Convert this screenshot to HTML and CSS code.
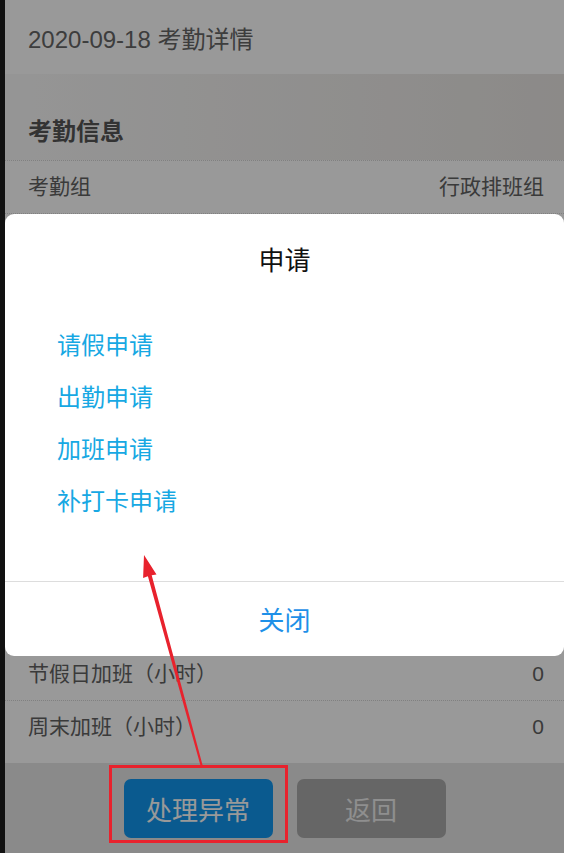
FILE: index.html
```html
<!DOCTYPE html>
<html lang="zh-CN">
<head>
    <meta charset="UTF-8">
    <meta name="viewport" content="width=device-width, initial-scale=1.0">
    <title>考勤详情</title>
    <link rel="stylesheet" href="styles.css">
</head>
<body>
    <div class="app">
        <div class="page">
            <div class="page-header">2020-09-18 考勤详情</div>
            <div class="section-title">考勤信息</div>
            <div class="rows">
                <div class="row"><span>考勤组</span><span>行政排班组</span></div>
                <!-- 弹窗遮住的部分 -->
                <div class="row row-blank"></div>
                <div class="row row-blank"></div>
                <div class="row row-blank"></div>
                <div class="row row-blank"></div>
                <div class="spacer"></div>
                <div class="row row-blank"></div>
                <div class="row row-blank"></div>
                <div class="row row-blank"></div>
                <div class="row row-blank"></div>
                <div class="row"><span>节假日加班（小时）</span><span>0</span></div>
                <div class="row"><span>周末加班（小时）</span><span>0</span></div>
            </div>
            <div class="footer">
                <button class="btn btn-primary">处理异常</button>
                <button class="btn btn-back">返回</button>
            </div>
        </div>

        <div class="mask"></div>

        <div class="dialog">
            <div class="dialog-title">申请</div>
            <ul class="dialog-list">
                <li>请假申请</li>
                <li>出勤申请</li>
                <li>加班申请</li>
                <li>补打卡申请</li>
            </ul>
            <div class="dialog-close">关闭</div>
        </div>

        <!-- 标注 -->
        <svg class="mark" width="559" height="853" viewBox="5 0 559 853">
            <rect x="110.5" y="766.5" width="176" height="75" fill="none" stroke="#e8222d" stroke-width="3"/>
            <polygon fill="#e8222d" points="144,555 156.5,574.4 151.7,575.2 203,766.7 201,767.3 147.9,576.2 143.1,578"/>
        </svg>
    </div>
</body>
</html>
```

FILE: styles.css
```css
body {
    margin: 0;
    background-color: #111;
    font-family: "Liberation Sans", "Noto Sans CJK SC", sans-serif;
}
.app {
    position: relative;
    margin-left: 5px;
    width: 559px;
    height: 853px;
    overflow: hidden;
    background-color: #fff;
}
.page {
    display: flex;
    flex-direction: column;
    height: 853px;
}
.page-header {
    padding: 22px 23px 16px;
    line-height: 36px;
    font-size: 24px;
    color: #666;
}
.section-title {
    height: 86px;
    box-sizing: border-box;
    padding: 40px 23px 0;
    line-height: 36px;
    font-size: 24px;
    font-weight: bold;
    color: #555;
    background: linear-gradient(to right, #f9f9f9, #e9e6e3);
}
.rows {
    flex: 1;
    overflow: hidden;
}
.row {
    display: flex;
    justify-content: space-between;
    padding: 0 20px 0 23px;
    line-height: 52px;
    font-size: 21px;
    color: #626262;
    border-top: 1px dotted #d6d6d6;
}
.row-blank {
    height: 52px;
}
.spacer {
    height: 10px;
}
.footer {
    display: flex;
    justify-content: center;
    gap: 24px;
    height: 90px;
    box-sizing: border-box;
    padding-top: 16px;
    background-color: #e6e6e6;
}
.btn {
    width: 149px;
    height: 59px;
    border: none;
    border-radius: 7px;
    font-family: "Noto Sans CJK SC", sans-serif;
    font-size: 26px;
    color: #fff;
}
.btn-primary {
    background-color: #1296ee;
}
.btn-back {
    background-color: #aaa;
    color: #eee;
}
.mask {
    position: absolute;
    top: 0;
    left: 0;
    right: 0;
    bottom: 0;
    background-color: rgba(0, 0, 0, 0.4);
}
.dialog {
    position: absolute;
    top: 214px;
    left: 0;
    right: 0;
    background-color: #fff;
    border-radius: 9px;
    font-family: "Noto Sans CJK SC", sans-serif;
}
.dialog-title {
    padding-top: 25px;
    line-height: 40px;
    font-size: 26px;
    text-align: center;
    color: #111;
}
.dialog-list {
    list-style: none;
    margin: 39px 0 0;
    padding: 0 0 55px 52px;
}
.dialog-list li {
    line-height: 52px;
    font-size: 24px;
    color: #17a8e3;
}
.dialog-close {
    border-top: 1px solid #ddd;
    line-height: 74px;
    font-size: 26px;
    text-align: center;
    color: #1e90e8;
}
.mark {
    position: absolute;
    top: 0;
    left: 0;
}
```
